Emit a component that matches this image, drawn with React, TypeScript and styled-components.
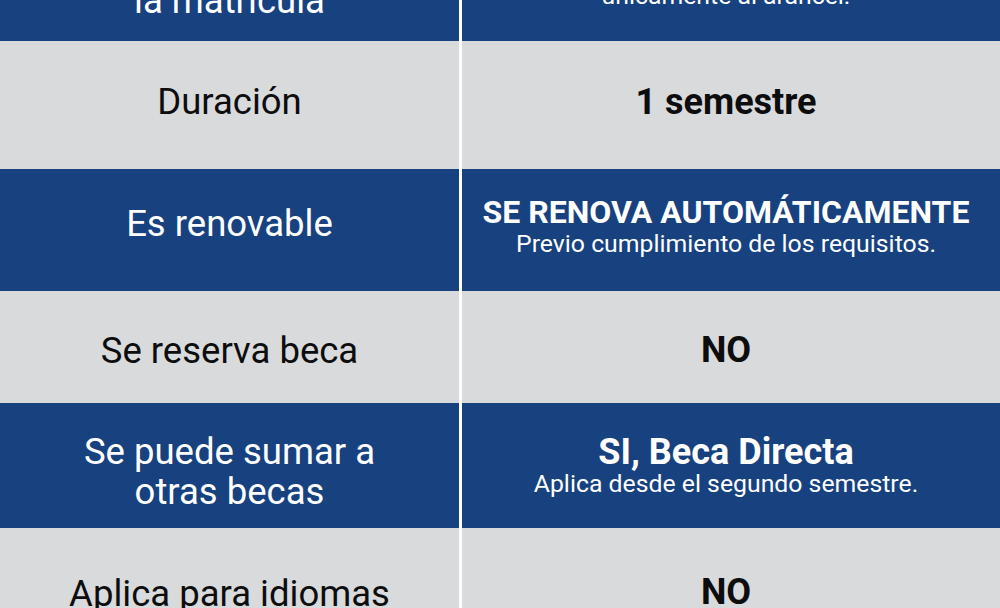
import React from "react";
import styled, {createGlobalStyle} from "styled-components";

const GlobalStyle = createGlobalStyle`
  html, body {
    margin: 0;
    padding: 0;
    background: #ffffff;
    overflow: hidden;
  }
  body {
    font-family: Roboto, "Liberation Sans", sans-serif;
  }
`;

type Tone = 'blue' | 'gray';

type Row = {
    tone: Tone;
    height: number;
    label: string[];
    labelShift?: number;
    value: string;
    valueSize?: number;
    valueShift?: number;
    note?: string[];
};

const rows: Row[] = [
    {
        tone: 'blue',
        height: 120,
        label: ['Descuento en', 'la matrícula'],
        value: 'DESCUENTO',
        valueShift: -17,
        note: ['Aplica sobre el valor de la matrícula,', 'únicamente al arancel.'],
    },
    {tone: 'gray', height: 128, label: ['Duración'], labelShift: -3, value: '1 semestre', valueShift: -3},
    {
        tone: 'blue',
        height: 122,
        label: ['Es renovable'],
        labelShift: -6,
        value: 'SE RENOVA AUTOMÁTICAMENTE',
        valueSize: 32,
        valueShift: -4,
        note: ['Previo cumplimiento de los requisitos.'],
    },
    {tone: 'gray', height: 112, label: ['Se reserva beca'], labelShift: 4, value: 'NO', valueShift: 3},
    {
        tone: 'blue',
        height: 125,
        label: ['Se puede sumar a', 'otras becas'],
        labelShift: 6,
        value: 'SI, Beca Directa',
        note: ['Aplica desde el segundo semestre.'],
    },
    {tone: 'gray', height: 128, label: ['Aplica para idiomas'], labelShift: 2, value: 'NO'},
];

const App: React.FC = () => {
    return (
        <>
            <GlobalStyle/>
            <Page>
                <Table>
                    {rows.map((row, i) => (
                        <React.Fragment key={i}>
                            <LabelCell tone={row.tone} h={row.height} shift={row.labelShift ?? 0}>
                                {row.label.map(line => <Line key={line}>{line}</Line>)}
                            </LabelCell>
                            <ValueCell tone={row.tone} h={row.height} shift={row.valueShift ?? 0}>
                                <Value size={row.valueSize ?? 36}>{row.value}</Value>
                                {row.note?.map(line => <Note key={line}>{line}</Note>)}
                            </ValueCell>
                        </React.Fragment>
                    ))}
                </Table>
            </Page>
        </>
    );
};

const Page = styled.div`
  width: 1000px;
  height: 608px;
  overflow: hidden;
  background: #ffffff;
`;

const Table = styled.div`
  display: grid;
  grid-template-columns: 459px 538px;
  column-gap: 3px;
  margin-top: -79px;
`;

// shift moves the centred content up (negative) or down (positive)
const Cell = styled.div<{ tone: Tone; h: number; shift: number }>`
  height: ${props => props.h}px;
  box-sizing: border-box;
  padding-top: ${props => Math.max(0, props.shift * 2)}px;
  padding-bottom: ${props => Math.max(0, -props.shift * 2)}px;
  display: flex;
  flex-direction: column;
  align-items: center;
  justify-content: center;
  text-align: center;
  overflow: visible;
  background: ${props => props.tone === 'blue' ? '#17427f' : '#d9dadc'};
  color: ${props => props.tone === 'blue' ? '#ffffff' : '#0d0d0d'};
`;

const LabelCell = styled(Cell)`
  font-size: 36.5px;
  font-weight: 400;
`;

const ValueCell = styled(Cell)`
  padding-right: 10px;
`;

const Line = styled.div`
  line-height: 40px;
  white-space: nowrap;
`;

const Value = styled.div<{ size: number }>`
  font-size: ${props => props.size}px;
  font-weight: 700;
  line-height: 36px;
  white-space: nowrap;
`;

const Note = styled.div`
  font-size: 24.8px;
  line-height: 28px;
  white-space: nowrap;
`;

export default App;
